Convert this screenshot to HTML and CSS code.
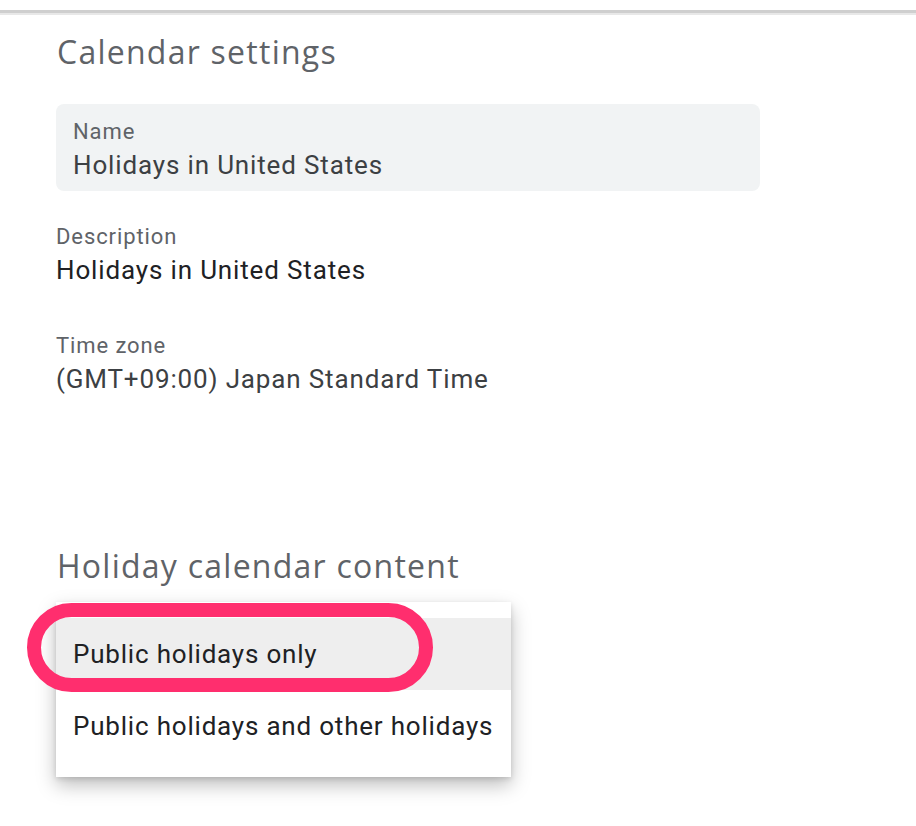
FILE: index.html
```html
<!DOCTYPE html>
<html>
<head>
<meta charset="utf-8">
<link rel="stylesheet" href="styles.css">
</head>
<body>
<div class="topline"></div>
<main class="page">
  <h1 class="heading">Calendar settings</h1>
  <div class="field-box">
    <div class="label">Name</div>
    <div class="value">Holidays in United States</div>
  </div>
  <div class="field">
    <div class="label">Description</div>
    <div class="value dark">Holidays in United States</div>
  </div>
  <div class="field">
    <div class="label">Time zone</div>
    <div class="value">(GMT+09:00) Japan Standard Time</div>
  </div>
  <h2 class="heading second">Holiday calendar content</h2>
  <div class="menu">
    <div class="option selected">Public holidays only<span class="ring"></span></div>
    <div class="option">Public holidays and other holidays</div>
  </div>
</main>
</body>
</html>
```
FILE: styles.css
```css
html, body {
  margin: 0;
  padding: 0;
  background: #ffffff;
}
body {
  width: 916px;
  height: 826px;
  overflow: hidden;
  font-family: Roboto, "Liberation Sans", sans-serif;
}
.topline {
  margin-top: 10px;
  height: 3px;
  background: #cfcfcf;
  border-bottom: 2px solid #e8e8e8;
}
.page {
  padding: 0 0 0 56px;
}
.heading {
  margin: 0;
  font-family: "Open Sans", Roboto, sans-serif;
  font-weight: 400;
  font-size: 32px;
  line-height: 40px;
  color: #5f6368;
  letter-spacing: 1.25px;
}
h1.heading {
  margin-top: 17px;
  padding-left: 1px;
}
.field-box {
  margin-top: 32px;
  width: 704px;
  height: 87px;
  box-sizing: border-box;
  background: #f1f3f4;
  border-radius: 8px;
  padding: 16px 17px 0;
}
.label {
  font-size: 22px;
  line-height: 24px;
  color: #5f6368;
  letter-spacing: 0.9px;
}
.value {
  margin-top: 4px;
  font-size: 26px;
  line-height: 34px;
  color: #3c4043;
  letter-spacing: 0.85px;
}
.value.dark {
  color: #202124;
}
.field {
  margin-top: 34px;
}
.field + .field {
  margin-top: 47px;
}
h2.heading.second {
  margin-top: 150px;
  padding-left: 1px;
}
.menu {
  position: relative;
  margin-top: 16px;
  width: 455px;
  background: #ffffff;
  padding: 16px 0 15px;
  box-shadow: 0 8px 18px rgba(0, 0, 0, 0.26), 0 2px 5px rgba(0, 0, 0, 0.12);
}
.option {
  position: relative;
  height: 72px;
  line-height: 72px;
  padding-left: 17px;
  font-size: 26px;
  color: #202124;
  letter-spacing: 0.8px;
}
.option.selected {
  background: #eeeeee;
}
.ring {
  position: absolute;
  left: -29px;
  top: -15px;
  width: 406px;
  height: 89px;
  box-sizing: border-box;
  border: 14px solid #ff2e6e;
  border-radius: 45px;
}
```
